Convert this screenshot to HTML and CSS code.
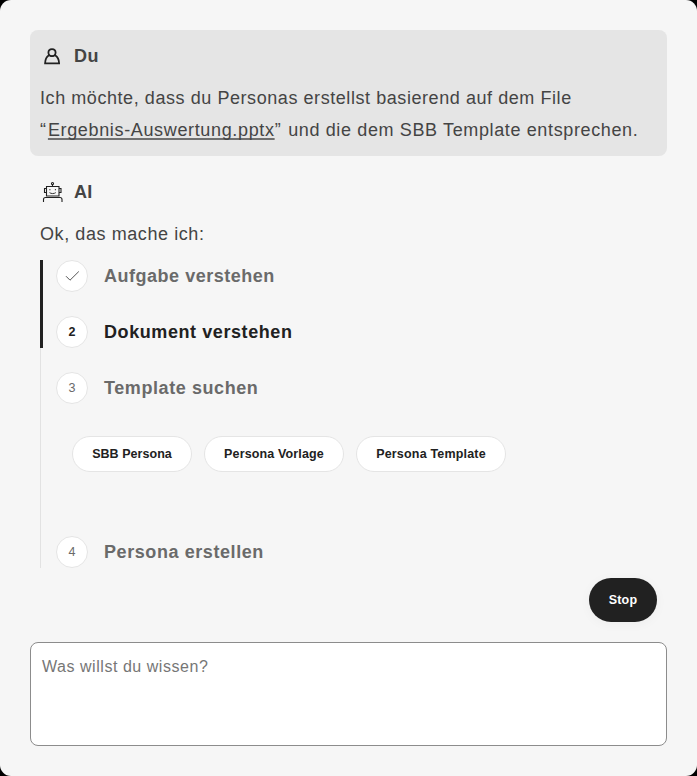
FILE: index.html
```html
<!DOCTYPE html>
<html lang="de">
<head>
<meta charset="utf-8">
<title>Chat</title>
<link rel="stylesheet" href="styles.css">
</head>
<body>
<main class="chat">
  <section class="message message-user">
    <header class="author">
      <svg class="icon" viewBox="0 0 24 24" fill="none" stroke="#212121" stroke-width="1.8">
        <path d="M9.900 11.600C8.700 10.900 8.400 9.900 8.400 8.800C8.400 6.600 9.900 5.200 12 5.200s3.600 1.400 3.600 3.600c0 1.100-.3 2.100-1.500 2.800M8.900 11.200C6.500 12.700 5.200 15.300 5.100 19.300H19.100C19 15.300 17.500 12.700 15.100 11.200M9.900 11.600c1.300.7 2.900.7 4.200 0"/>
      </svg>
      <h2 class="name name-user">Du</h2>
    </header>
    <p class="text"><span class="line-a">Ich möchte, dass du Personas erstellst basierend auf dem File</span><br><span class="line-b"><span class="quote">“</span><a class="file">Ergebnis-Auswertung.pptx</a><span class="quote">”</span> und die dem SBB Template entsprechen.</span></p>
  </section>

  <section class="message">
    <header class="author">
      <svg class="icon" viewBox="0 0 24 24" fill="none" stroke="#212121" stroke-width="1.1">
        <circle cx="12.500" cy="3.600" r="1.050"/>
        <path d="M12.500 4.600v1.900M6.500 6.500h12.500v9.500h-12.500zM6.500 8.500h-2v4h2M19 8.500h2v4h-2M3.500 22v-2.500q0-2 2-2h14.500q2 0 2 2V22"/>
        <path stroke-width=".9" d="M9.500 12.600c1.700 1.300 4.600 1.300 6.300 0M9.900 9v1.300M15.400 9v1.300"/>
      </svg>
      <h2 class="name">AI</h2>
    </header>
    <p class="text">Ok, das mache ich:</p>

    <ol class="steps">
      <li class="step">
        <span class="bubble"><svg class="check" viewBox="0 0 16 12" fill="none" stroke="#555"><path d="M2 6.200 6 10.200 14.800 1.500"/></svg></span>
        <span class="label label-a">Aufgabe verstehen</span>
      </li>
      <li class="step active">
        <span class="bubble">2</span>
        <span class="label">Dokument verstehen</span>
      </li>
      <li class="step">
        <span class="bubble">3</span>
        <span class="label">Template suchen</span>
      </li>
      <li class="chips">
        <button class="chip chip-a">SBB Persona</button>
        <button class="chip chip-b">Persona Vorlage</button>
        <button class="chip chip-c">Persona Template</button>
      </li>
      <li class="step">
        <span class="bubble">4</span>
        <span class="label">Persona erstellen</span>
      </li>
    </ol>
  </section>

  <div class="actions"><button class="stop">Stop</button></div>
  <textarea class="prompt" placeholder="Was willst du wissen?"></textarea>
</main>
</body>
</html>
```

FILE: styles.css
```css
* { box-sizing: border-box; margin: 0; padding: 0; }
html { background: #000; }
body, button, textarea { font-family: "Liberation Sans", Arial, sans-serif; }
.chat { width: 697px; height: 776px; padding: 30px; background: #f6f6f6; border-radius: 11px; display: flex; flex-direction: column; color: #444; }
.message { padding: 10px; }
.message-user { background: #e5e5e5; border-radius: 8px; height: 126px; margin-bottom: 10px; }
.author { display: flex; align-items: center; gap: 10px; height: 32px; }
.icon { width: 24px; height: 24px; }
.name { font-size: 18px; line-height: 32px; font-weight: 700; letter-spacing: .2px; }
.name-user { letter-spacing: .6px; }
.text { margin-top: 10px; font-size: 18px; line-height: 32px; letter-spacing: .58px; white-space: nowrap; }
.line-a { letter-spacing: .565px; }
.line-b { letter-spacing: .63px; }
.quote { letter-spacing: 1.9px; }
.file { text-decoration: underline #707070; text-decoration-thickness: 2px; text-underline-offset: 2px; text-decoration-skip-ink: none; letter-spacing: .65px; }
.steps { position: relative; list-style: none; margin-top: 10px; height: 308px; border-left: 1px solid #e2e2e2; padding-left: 15px; display: flex; flex-direction: column; }
.steps::before { content: ""; position: absolute; left: -1px; top: 0; width: 3px; height: 88px; background: #212121; }
.step { display: flex; align-items: center; gap: 16px; height: 32px; margin-bottom: 24px; color: #6a6a6a; }
.bubble { display: flex; align-items: center; justify-content: center; width: 32px; height: 32px; border: 1px solid #e5e5e5; border-radius: 50%; background: #fff; font-size: 12.5px; }
.check { width: 16px; height: 12px; }
.label { font-size: 18px; font-weight: 700; letter-spacing: .58px; }
.label-a { letter-spacing: .52px; }
.active { color: #212121; }
.active .bubble { font-weight: 700; }
.chips { display: flex; gap: 12px; margin: 8px 0 64px 16px; }
.chip { height: 36px; border: 1px solid #e5e5e5; border-radius: 18px; background: #fff; color: #212121; font-size: 12.5px; font-weight: 700; letter-spacing: .14px; }
.chip-a { width: 120px; letter-spacing: .04px; }
.chip-b { width: 140px; }
.chip-c { width: 150px; letter-spacing: .18px; }
.actions { display: flex; justify-content: flex-end; padding-right: 10px; margin-bottom: 20px; }
.stop { width: 68px; height: 44px; border: 0; border-radius: 22px; background: #212121; color: #fff; font-size: 12.5px; font-weight: 700; letter-spacing: .2px; box-shadow: 0 2px 12px rgba(0, 0, 0, .04); }
.prompt { width: 637px; height: 104px; border: 1px solid #8c8c8c; border-radius: 8px; background: #fff; padding: 11px; font-size: 16px; line-height: 25px; letter-spacing: .54px; resize: none; outline: 0; }
.prompt::placeholder { color: #767676; }
```
